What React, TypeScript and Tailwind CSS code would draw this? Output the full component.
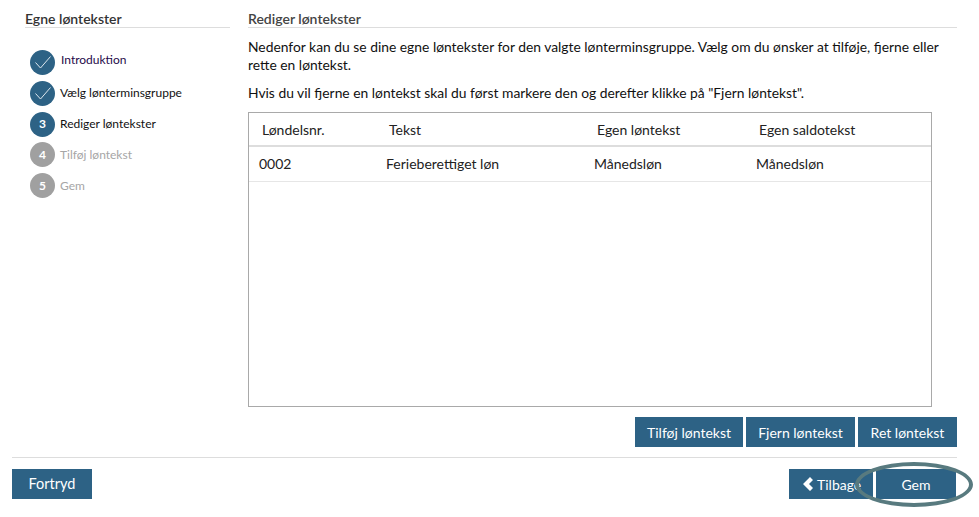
import React from "react";

function Check() {
  return (
    <svg width="16" height="13" viewBox="0 0 16 13" fill="none" stroke="#dde7ee" strokeWidth="1" className="block">
      <path d="M0.5 6.5 L5.5 12 L15.5 0.5" />
    </svg>
  );
}

function Step({
  mark,
  label,
  state,
  className = "h-[31px]",
  labelClass = "",
}: {
  mark: React.ReactNode;
  label: string;
  state: "done" | "cur" | "todo";
  className?: string;
  labelClass?: string;
}) {
  const circle = state === "todo" ? "bg-[#a0a0a0]" : "bg-[#2d6285]";
  const text = state === "todo" ? "text-[#a6a6a6]" : label === "Introduktion" ? "text-[#1f0a4a]" : "text-[#111111]";
  return (
    <div className={`flex items-center ${className}`}>
      <div className={`flex h-[25px] w-[25px] shrink-0 items-center justify-center rounded-full text-[12px] font-bold text-white ${circle}`}>
        {mark}
      </div>
      <span className={`ml-[5px] text-[12px] ${text} ${labelClass}`}>{label}</span>
    </div>
  );
}

function Btn({ children, className = "" }: { children: React.ReactNode; className?: string }) {
  return (
    <div className={`flex h-[30px] items-center justify-center bg-[#2d6285] text-[14px] text-white ${className}`}>
      {children}
    </div>
  );
}

export default function App() {
  return (
    <div className="relative flex h-[517px] w-[979px] flex-col overflow-hidden bg-white text-[#222222] [font-family:Lato,'Open_Sans',sans-serif]">
      <div className="flex h-[457px] pl-[25px] pr-[22px] pt-[11px]">
        <aside className="w-[205px] shrink-0">
          <h2 className="box-content h-[16px] border-b border-[#dddddd] text-[14px] font-semibold leading-[16px] text-[#333333]">Egne løntekster</h2>
          <div className="mt-[18px] pl-[5px]">
            <Step mark={<Check />} label="Introduktion" state="done" className="h-[32px]" labelClass="ml-[6px] mb-[4px]" />
            <Step mark={<Check />} label="Vælg lønterminsgruppe" state="done" className="h-[31px]" labelClass="mb-[2px]" />
            <Step mark="3" label="Rediger løntekster" state="cur" className="h-[30px]" />
            <Step mark="4" label="Tilføj løntekst" state="todo" />
            <Step mark="5" label="Gem" state="todo" />
          </div>
        </aside>
        <main className="ml-[18px] flex min-w-0 flex-1 flex-col">
          <h2 className="box-content h-[16px] border-b border-[#dddddd] text-[14px] font-semibold leading-[16px] text-[#444444]">Rediger løntekster</h2>
          <p className="mt-[10px] text-[13.85px] leading-[18px] text-[#111111]">
            Nedenfor kan du se dine egne løntekster for den valgte lønterminsgruppe. Vælg om du ønsker at tilføje, fjerne eller rette en løntekst.
          </p>
          <p className="mt-[10px] text-[13.85px] leading-[18px] text-[#111111]">
            Hvis du vil fjerne en løntekst skal du først markere den og derefter klikke på "Fjern løntekst".
          </p>
          <div className="mt-[10px] mr-[25px] h-[295px] border border-[#a9a9a9] text-[14px] text-[#222222]">
            <div className="grid h-[34px] grid-cols-[127px_208px_162px_1fr] items-center border-b-[2px] border-[#dddddd] pl-[13px]">
              <span>Løndelsnr.</span>
              <span>Tekst</span>
              <span>Egen løntekst</span>
              <span>Egen saldotekst</span>
            </div>
            <div className="grid h-[35px] grid-cols-[127px_208px_162px_1fr] items-center border-b border-[#e6e6e6] pb-[1px] pl-[10px]">
              <span>0002</span>
              <span>Ferieberettiget løn</span>
              <span>Månedsløn</span>
              <span>Månedsløn</span>
            </div>
          </div>
          <div className="mt-[10px] flex justify-end gap-[3px]">
            <Btn className="w-[108px]">Tilføj løntekst</Btn>
            <Btn className="w-[109px]">Fjern løntekst</Btn>
            <Btn className="w-[99px]">Ret løntekst</Btn>
          </div>
        </main>
      </div>
      <div className="ml-[12px] mr-[22px] border-t border-[#dddddd]" />
      <div className="flex justify-between pl-[12px] pr-[23px] pt-[11px]">
        <Btn className="w-[80px] !text-[14.5px]">Fortryd</Btn>
        <div className="flex gap-[3px]">
          <Btn className="w-[84px] justify-start pl-[14px]">
            <svg width="10" height="14" viewBox="0 0 10 14" className="mr-[4px]" fill="#ffffff">
              <path d="M7 0 L10 3 L6 7 L10 11 L7 14 L0 7 Z" />
            </svg>
            Tilbage
          </Btn>
          <Btn className="w-[80px]">Gem</Btn>
        </div>
      </div>
      <div className="absolute left-[855px] top-[462px] h-[45px] w-[118px] rounded-[50%] border-[4px] border-[#587a7f]" />
    </div>
  );
}
